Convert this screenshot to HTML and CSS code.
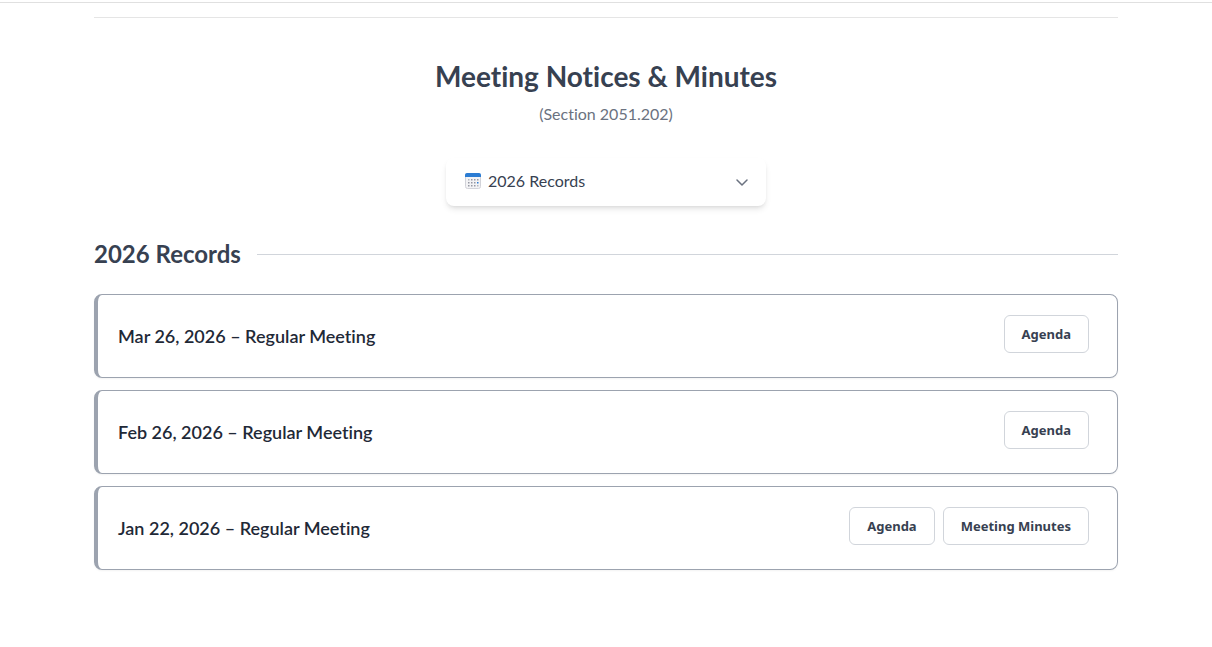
FILE: index.html
```html
<!DOCTYPE html>
<html lang="en">
<head>
    <meta charset="UTF-8">
    <meta name="viewport" content="width=device-width, initial-scale=1.0">
    <title>Meeting Notices &amp; Minutes</title>
    <link rel="stylesheet" href="styles.css">
</head>
<body>
<div class="top-rule"></div>
<main class="container">
    <header class="page-header">
        <h1>Meeting Notices &amp; Minutes</h1>
        <p>(Section 2051.202)</p>
    </header>

    <div class="year-picker">
        <svg class="calendar-icon" viewBox="0 0 16 16" aria-hidden="true">
            <rect x="0.5" y="0.5" width="15" height="15" rx="2" fill="#f3f3f5" stroke="#d2d3d9"/>
            <path d="M0 4V2a2 2 0 0 1 2-2h12a2 2 0 0 1 2 2v2z" fill="#2b7cd3"/>
            <path d="M6 6h1.500v1.500H6zM9 6h1.500v1.500H9zM12 6h1.500v1.500H12zM3 9h1.500v1.500H3zM6 9h1.500v1.500H6zM9 9h1.500v1.500H9zM3 12h1.500v1.500H3zM6 12h1.500v1.500H6zM9 12h1.500v1.500H9z" fill="#9698a3"/>
            <path d="M3 6h1.500v1.500H3zM12 12h1.500v1.500H12z" fill="#b4b6bf"/>
            <path d="M12 9h1.500v1.500H12z" fill="#2b7cd3"/>
        </svg>
        <select id="year" aria-label="Year">
            <option>2026 Records</option>
        </select>
        <svg class="chevron" viewBox="0 0 12 8" aria-hidden="true">
            <path d="M1 1l5 5 5-5" fill="none" stroke="#6b7280" stroke-width="1.5" stroke-linecap="round" stroke-linejoin="round"/>
        </svg>
    </div>

    <section>
        <h2>2026 Records</h2>
        <div class="record">
            <h3>Mar 26, 2026 – Regular Meeting</h3>
            <div class="actions">
                <button type="button">Agenda</button>
            </div>
        </div>
        <div class="record">
            <h3>Feb 26, 2026 – Regular Meeting</h3>
            <div class="actions">
                <button type="button">Agenda</button>
            </div>
        </div>
        <div class="record">
            <h3>Jan 22, 2026 – Regular Meeting</h3>
            <div class="actions">
                <button type="button">Agenda</button>
                <button type="button">Meeting Minutes</button>
            </div>
        </div>
    </section>
</main>
</body>
</html>
```
FILE: styles.css
```css
* {
    box-sizing: border-box;
}

body {
    margin: 0;
    background-color: #fff;
    color: #374151;
    font-family: Lato, sans-serif;
    font-size: 16px;
    line-height: 24px;
    font-variant-ligatures: none;
}

h1, h2, h3, p {
    margin: 0;
}

.top-rule {
    height: 3px;
    border-bottom: 1px solid #e0e0e0;
}

.container {
    max-width: 1024px;
    margin: 14px auto 0;
    border-top: 1px solid #e5e5e5;
}

.page-header {
    padding-top: 40px;
    text-align: center;
}

h1 {
    font-size: 28px;
    line-height: 36px;
    font-weight: 700;
}

.page-header p {
    margin-top: 8px;
    color: #6b7280;
}

/* Year drop-down */
.year-picker {
    position: relative;
    width: 320px;
    margin: 32px auto;
}

.year-picker select {
    display: block;
    width: 100%;
    height: 48px;
    padding: 0 40px 4px 42px;
    appearance: none;
    border: none;
    border-radius: 8px;
    background-color: #fff;
    box-shadow: 0 4px 6px -1px rgba(0, 0, 0, 0.1), 0 2px 4px -2px rgba(0, 0, 0, 0.1);
    color: #374151;
    font-family: inherit;
    font-size: 16px;
}

.calendar-icon {
    position: absolute;
    top: 15px;
    left: 19px;
    width: 16px;
    height: 16px;
    pointer-events: none;
}

.chevron {
    position: absolute;
    top: 21px;
    right: 18px;
    width: 12px;
    height: 8px;
    pointer-events: none;
}

/* Year heading with a line to the right */
h2 {
    display: flex;
    align-items: center;
    gap: 16px;
    margin-bottom: 24px;
    font-size: 24px;
    line-height: 32px;
    font-weight: 700;
}

h2::after {
    content: "";
    flex: 1;
    border-top: 1px solid #d1d5db;
}

.record {
    display: flex;
    justify-content: space-between;
    min-height: 84px;
    margin-bottom: 12px;
    padding: 20px 28px 20px 20px;
    border: 1px solid #9ca3af;
    border-left-width: 4px;
    border-radius: 8px;
    box-shadow: 0 1px 2px rgba(0, 0, 0, 0.05);
}

h3 {
    align-self: center;
    color: #1f2937;
    font-size: 18px;
    line-height: 28px;
    font-weight: 600;
}

.actions {
    display: flex;
    align-items: flex-start;
    gap: 8px;
}

button {
    height: 38px;
    padding: 0 17px;
    border: 1px solid #d1d5db;
    border-radius: 6px;
    background-color: #fff;
    color: #374151;
    font-family: "Noto Sans", sans-serif;
    font-size: 13px;
    font-weight: 700;
    cursor: pointer;
}

button:hover {
    background-color: #f9fafb;
}
```
